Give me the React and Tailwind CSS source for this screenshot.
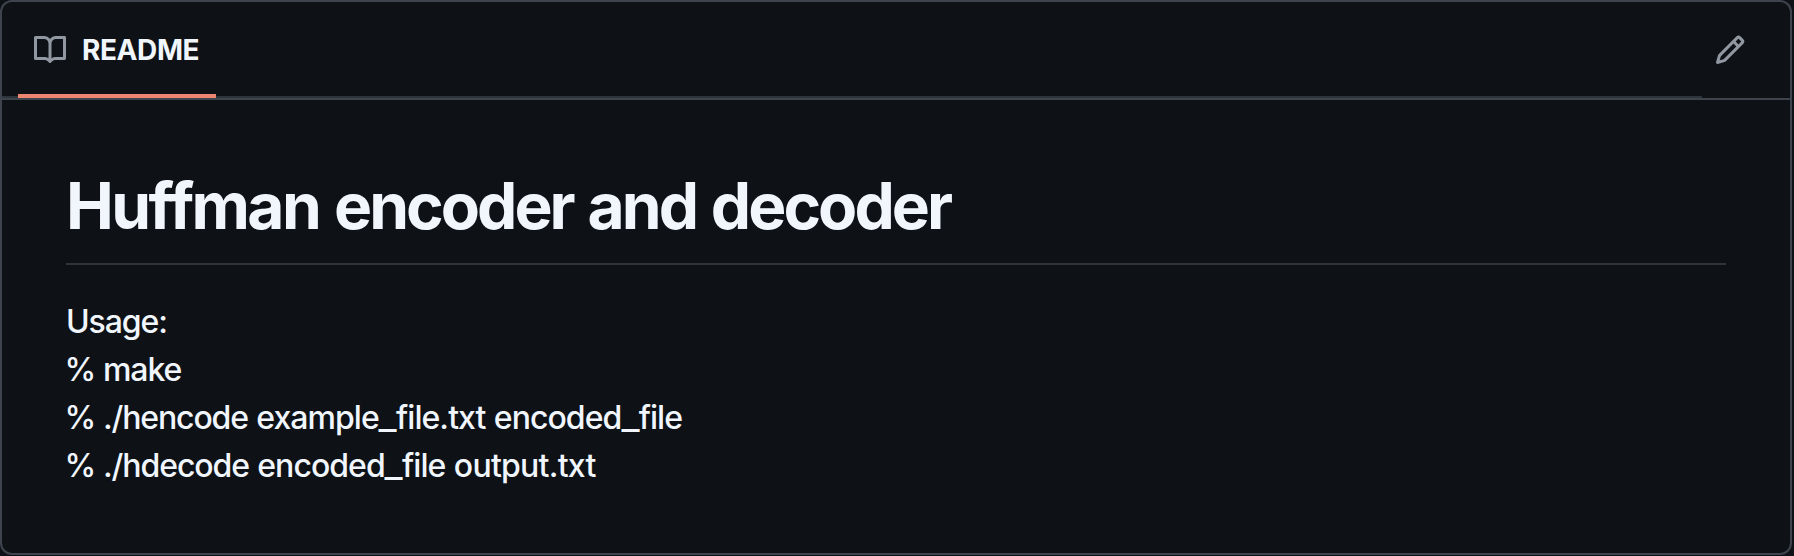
const BookIcon = () => (
  <svg viewBox="0 0 16 16" className="size-8 shrink-0 fill-[#9198a1]">
    <path d="M0 1.75A.75.75 0 0 1 .75 1h4.253c1.227 0 2.317.59 3 1.501A3.743 3.743 0 0 1 11.006 1h4.245a.75.75 0 0 1 .75.75v10.5a.75.75 0 0 1-.75.75h-4.507a2.25 2.25 0 0 0-1.591.659l-.622.621a.75.75 0 0 1-1.06 0l-.622-.621A2.25 2.25 0 0 0 5.258 13H.75a.75.75 0 0 1-.75-.75Zm7.251 10.324.004-5.073-.002-2.253A2.25 2.25 0 0 0 5.003 2.5H1.5v9h3.757a3.75 3.75 0 0 1 1.994.574ZM8.755 4.75l-.004 7.322a3.752 3.752 0 0 1 1.992-.572H14.5v-9h-3.495a2.25 2.25 0 0 0-2.25 2.25Z" />
  </svg>
);

const PencilIcon = () => (
  <svg viewBox="0 0 16 16" className="size-8 fill-[#9198a1]">
    <path d="M11.013 1.427a1.75 1.75 0 0 1 2.474 0l1.086 1.086a1.75 1.75 0 0 1 0 2.474l-8.61 8.61c-.21.21-.47.364-.756.445l-3.251.93a.75.75 0 0 1-.927-.928l.929-3.25c.081-.286.235-.547.445-.758l8.61-8.61Zm.176 4.823L9.75 4.81l-6.286 6.287a.253.253 0 0 0-.064.108l-.558 1.953 1.953-.558a.253.253 0 0 0 .108-.064Zm1.238-3.763a.25.25 0 0 0-.354 0L10.811 3.75l1.439 1.44 1.263-1.263a.25.25 0 0 0 0-.354Z" />
  </svg>
);

const Prompt = () => <span className="-ml-[1.5px] tracking-[-0.9px] [word-spacing:0]">% </span>;

const Underscore = () => <span className="mx-[1.7px] inline-block scale-x-[1.22]">_</span>;

export default function App() {
  return (
    <div className="h-[556px] bg-[#0e1116] pr-0.5 pb-px font-['Inter',sans-serif] text-[#f0f6fc]">
      <section className="flex h-full flex-col overflow-hidden rounded-xl border-2 border-[#3d444d]">
        <header className="flex h-[98px] shrink-0 border-b-2 border-[#3d444d]">
          <nav className="flex w-[1700px] border-b-2 border-[#2f343b] pl-4">
            <a className="-mb-0.5 flex w-[198px] items-start gap-4 border-b-4 border-[#ec8670] pt-8 pl-4">
              <BookIcon />
              <span className="text-[28px] leading-[33px] font-bold tracking-[-0.4px]">README</span>
            </a>
          </nav>
          <button className="ml-3 flex pt-8">
            <PencilIcon />
          </button>
        </header>
        <article className="mr-16 ml-16 pt-16 whitespace-nowrap">
          <h1 className="h-[101px] border-b-2 border-[#2f343b] text-[64px] leading-[83px] font-bold tracking-[-2.95px] [word-spacing:2.6px]">
            <span className="tracking-[-2.6px]">Huffman</span> encoder and decoder
          </h1>
          <div className="mt-[33px] text-[32px] leading-[48px] font-[450]">
            <p className="tracking-[-1.1px]">Usage:</p>
            <p className="tracking-[-1.1px]"><Prompt />make</p>
            <p className="tracking-[-0.95px] [word-spacing:0.8px]">
              <Prompt /><span className="tracking-[-1.15px]">./hencode</span> example<Underscore />file.txt encoded<Underscore />file
            </p>
            <p className="tracking-[-0.95px] [word-spacing:0.8px]">
              <Prompt /><span className="tracking-[-1.1px]">./hdecode</span> encoded<Underscore />file <span className="tracking-[-0.75px]">output.txt</span>
            </p>
          </div>
        </article>
      </section>
    </div>
  );
}
